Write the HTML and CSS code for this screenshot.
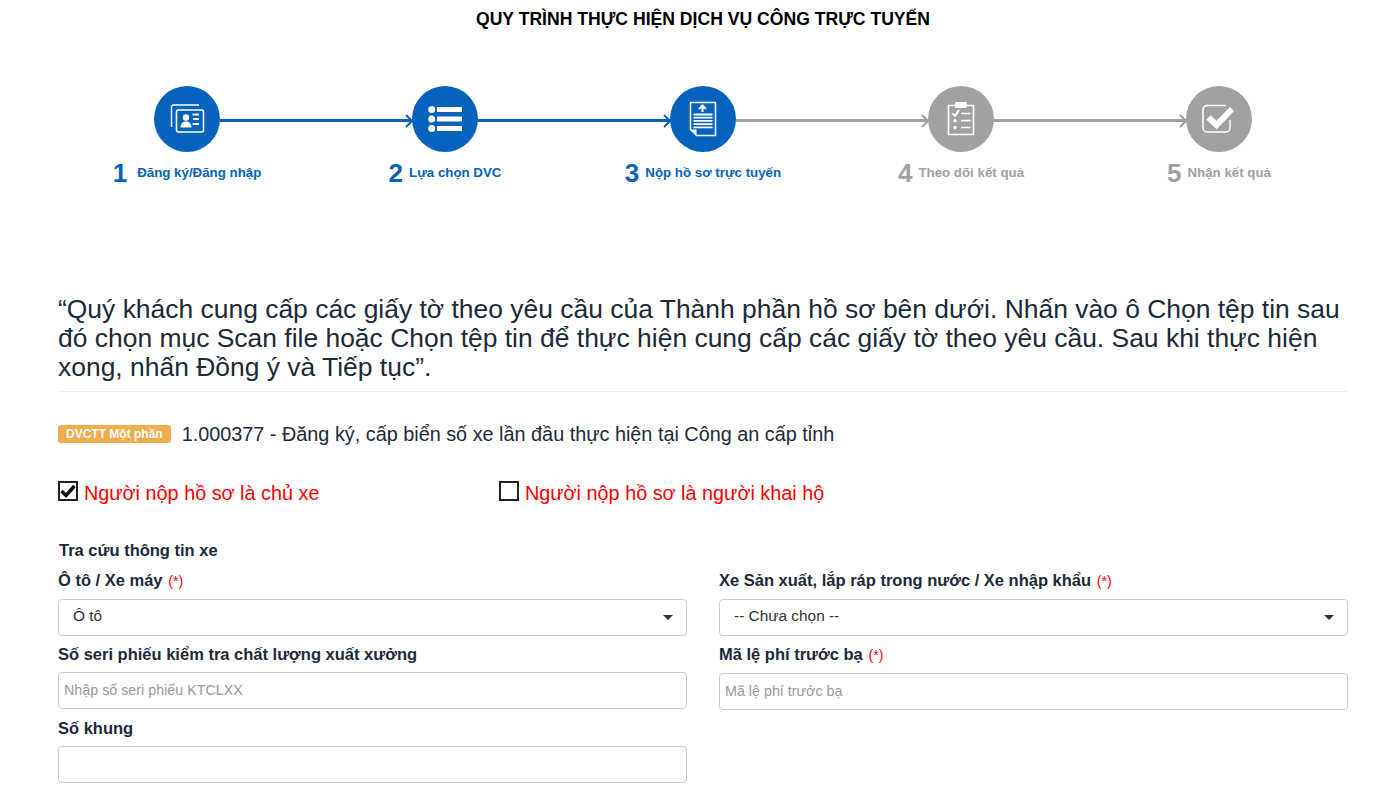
FILE: index.html
```html
<!DOCTYPE html>
<html lang="vi">
<head>
<meta charset="utf-8">
<title>Quy trình thực hiện dịch vụ công trực tuyến</title>
<link rel="stylesheet" href="styles.css">
</head>
<body>
<main class="page">
  <h1 class="title">QUY TRÌNH THỰC HIỆN DỊCH VỤ CÔNG TRỰC TUYẾN</h1>
  <ol class="steps">
    <li class="step on">
      <div class="circle">
        <svg width="36" height="36" viewBox="0 0 36 36" fill="none" stroke="#fff">
          <path d="M2.500 26V6a2 2 0 0 1 2-2H30" stroke-width="1.400"/>
          <rect x="7.500" y="9" width="27" height="22" rx="2" stroke-width="1.600"/>
          <circle cx="17" cy="16.500" r="3.200" fill="#fff" stroke="none"/>
          <path d="M11.500 26.500c0-4 2.500-6 5.500-6s5.500 2 5.500 6z" fill="#fff" stroke="none"/>
          <path d="M23.500 13.500h6.500M24 18h6M23.500 23h6.500" stroke-width="1.800"/>
        </svg>
      </div>
      <div class="caption"><span class="num num-gap">1</span><span class="cap-text">Đăng ký/Đăng nhập</span></div>
      <div class="link on"><svg class="chev" width="8" height="14" viewBox="0 0 8 14" fill="none"><path d="M1 1l6 6-6 6" stroke-width="2"/></svg></div>
    </li>
    <li class="step on">
      <div class="circle">
        <svg width="36" height="30" viewBox="0 0 36 30" fill="#fff">
          <circle cx="4.700" cy="5.500" r="3.500"/><circle cx="4.700" cy="15" r="3.500"/><circle cx="4.700" cy="24.500" r="3.500"/>
          <rect x="10" y="3" width="25" height="5"/><rect x="10" y="12.500" width="25" height="5"/><rect x="10" y="22" width="25" height="5"/>
        </svg>
      </div>
      <div class="caption"><span class="num">2</span><span class="cap-text">Lựa chọn DVC</span></div>
      <div class="link on"><svg class="chev" width="8" height="14" viewBox="0 0 8 14" fill="none"><path d="M1 1l6 6-6 6" stroke-width="2"/></svg></div>
    </li>
    <li class="step on">
      <div class="circle">
        <svg width="28" height="36" viewBox="0 0 28 36" fill="none" stroke="#fff">
          <path d="M1.500 1.500h25v33H7.500l-6-6z" stroke-width="1.500"/>
          <path d="M1.500 28.500h6v6z" fill="#fff" stroke="none"/>
          <path d="M13.500 11V5M10 8l3.500-3.500L17 8" stroke-width="2.200"/>
          <path d="M4.500 13.500h19M4.500 16.700h19M4.500 19.900h19M4.500 23.100h19M4.500 26.300h19" stroke-width="1.800"/>
        </svg>
      </div>
      <div class="caption"><span class="num">3</span><span class="cap-text">Nộp hồ sơ trực tuyến</span></div>
      <div class="link"><svg class="chev" width="8" height="14" viewBox="0 0 8 14" fill="none"><path d="M1 1l6 6-6 6" stroke-width="2"/></svg></div>
    </li>
    <li class="step">
      <div class="circle">
        <svg width="28" height="34" viewBox="0 0 28 34" fill="none" stroke="#fff">
          <path d="M8 3.500H1.500v29h25v-29H20" stroke-width="1.700"/>
          <rect x="8" y="0" width="12" height="6" rx="1.500" fill="#fff" stroke="none"/>
          <path d="M5.500 11.500l2.500 2.500 4-6" stroke-width="2"/>
          <path d="M14 11.500h9.500M14 18.700h9.500M14 25.500h9.500" stroke-width="1.700"/>
          <circle cx="8" cy="18.700" r="1.700" fill="#fff" stroke="none"/><circle cx="8" cy="25.500" r="1.700" fill="#fff" stroke="none"/>
        </svg>
      </div>
      <div class="caption"><span class="num">4</span><span class="cap-text">Theo dõi kết quả</span></div>
      <div class="link"><svg class="chev" width="8" height="14" viewBox="0 0 8 14" fill="none"><path d="M1 1l6 6-6 6" stroke-width="2"/></svg></div>
    </li>
    <li class="step">
      <div class="circle">
        <svg width="34" height="32" viewBox="0 0 34 32" fill="none" stroke="#fff">
          <path d="M24 2.500H5a4 4 0 0 0-4 4v18.500a4 4 0 0 0 4 4h19a4 4 0 0 0 4-4v-8" stroke-width="1.500"/>
          <path d="M6.500 14.500l8 7.500L30 6" stroke-width="6"/>
        </svg>
      </div>
      <div class="caption"><span class="num">5</span><span class="cap-text">Nhận kết quả</span></div>
    </li>
  </ol>

  <p class="lead">“Quý khách cung cấp các giấy tờ theo yêu cầu của Thành phần hồ sơ bên dưới. Nhấn vào ô Chọn tệp tin sau đó chọn mục Scan file hoặc Chọn tệp tin để thực hiện cung cấp các giấy tờ theo yêu cầu. Sau khi thực hiện xong, nhấn Đồng ý và Tiếp tục”.</p>
  <hr class="rule">

  <div class="service">
    <span class="badge">DVCTT Một phần</span>
    <span class="service-name">1.000377 - Đăng ký, cấp biển số xe lần đầu thực hiện tại Công an cấp tỉnh</span>
  </div>

  <div class="who">
    <label class="who-item">
      <span class="box"><svg width="16" height="14" viewBox="0 0 16 14" fill="none"><path d="M1.500 7l4.500 4.500L14.500 2" stroke="#111" stroke-width="3.400"/></svg></span>
      <span>Người nộp hồ sơ là chủ xe</span>
    </label>
    <label class="who-item">
      <span class="box"></span>
      <span>Người nộp hồ sơ là người khai hộ</span>
    </label>
  </div>

  <h2 class="section">Tra cứu thông tin xe</h2>
  <div class="form">
    <div class="field">
      <div class="label">Ô tô / Xe máy <span class="req">(*)</span></div>
      <div class="control select">Ô tô<i class="caret"></i></div>
    </div>
    <div class="field">
      <div class="label">Xe Sản xuất, lắp ráp trong nước / Xe nhập khẩu <span class="req">(*)</span></div>
      <div class="control select">-- Chưa chọn --<i class="caret"></i></div>
    </div>
    <div class="field">
      <div class="label">Số seri phiếu kiểm tra chất lượng xuất xưởng</div>
      <div class="control ph">Nhập số seri phiếu KTCLXX</div>
    </div>
    <div class="field">
      <div class="label">Mã lệ phí trước bạ <span class="req">(*)</span></div>
      <div class="control ph">Mã lệ phí trước bạ</div>
    </div>
    <div class="field">
      <div class="label">Số khung</div>
      <div class="control"></div>
    </div>
  </div>
</main>
</body>
</html>
```
FILE: styles.css
```css
* { box-sizing: border-box; }
html, body { margin: 0; padding: 0; background: #fff; }
body { font-family: "Liberation Sans", Arial, sans-serif; color: #1c2a3a; overflow: hidden; height: 787px; }
.page { padding: 0 42px 0 58px; }

.title { margin: 0; padding-top: 10px; height: 86px; font-size: 17.600px; line-height: 18px; font-weight: 700; color: #000; text-align: center; }

.steps { list-style: none; margin: 0; padding: 0; display: grid; grid-template-columns: repeat(5, 1fr); height: 209px; }
.step { position: relative; display: flex; flex-direction: column; align-items: center; --c: #a0a1a3; }
.step.on { --c: #0563be; }
.circle { width: 66px; height: 66px; border-radius: 50%; background: var(--c); display: flex; align-items: center; justify-content: center; }
.caption { margin-top: 1px; display: flex; align-items: center; height: 40px; color: var(--c); font-weight: 700; }
.num { font-size: 26px; line-height: 40px; margin-right: 6px; }
.num-gap { margin-right: 10px; }
.cap-text { font-size: 13.300px; line-height: 16px; margin-top: -1px; }

.link { position: absolute; left: calc(50% + 33px); top: 33px; width: 192px; height: 3px; background: #a0a1a3; }
.link.on { background: #0563be; }
.chev { position: absolute; right: -1px; top: -5.500px; stroke: #a0a1a3; }
.link.on .chev { stroke: #0563be; }

.lead { margin: 0; font-size: 26.450px; line-height: 29px; color: #1c2a3a; }
.rule { margin: 9px 0 0; border: 0; border-top: 1px solid #eee; }

.service { display: flex; align-items: center; gap: 11px; margin-top: 27px; height: 30px; }
.badge { background: #f0ad4e; color: #fff; font-size: 12px; line-height: 18px; height: 18px; font-weight: 700; padding: 0 8px; border-radius: 3px; }
.service-name { font-size: 19.830px; line-height: 28px; }

.who { display: grid; grid-template-columns: 441px 1fr; margin-top: 28px; height: 32px; }
.who-item { display: flex; align-items: center; gap: 6px; color: #f00; font-size: 19.830px; line-height: 28px; }
.box { width: 20px; height: 20px; border: 2px solid #222; margin-top: -4px; display: flex; align-items: center; justify-content: center; background: #fff; }

.section { margin: 0; padding-top: 32px; font-size: 16.500px; line-height: 18px; font-weight: 700; height: 59px; padding-left: 1px; }
.form { display: grid; grid-template-columns: 1fr 1fr; column-gap: 32px; margin-top: 2px; }
.field { height: 74px; padding-top: 1px; }
.label { font-size: 16.500px; line-height: 18px; font-weight: 700; margin-bottom: 9px; }
.req { color: #f00; font-weight: 400; font-size: 14.300px; margin-left: 1px; }
.control { height: 37px; border: 1px solid #ccc; border-radius: 4px; background: #fff; font-size: 14.300px; line-height: 35px; padding: 0 5px; position: relative; }
.select { padding-left: 14px; font-size: 15.400px; line-height: 32px; color: #333; }
.ph { color: #999; }
.caret { position: absolute; right: 13px; top: 15px; width: 0; height: 0; border-left: 5px solid transparent; border-right: 5px solid transparent; border-top: 5px solid #333; }
```
